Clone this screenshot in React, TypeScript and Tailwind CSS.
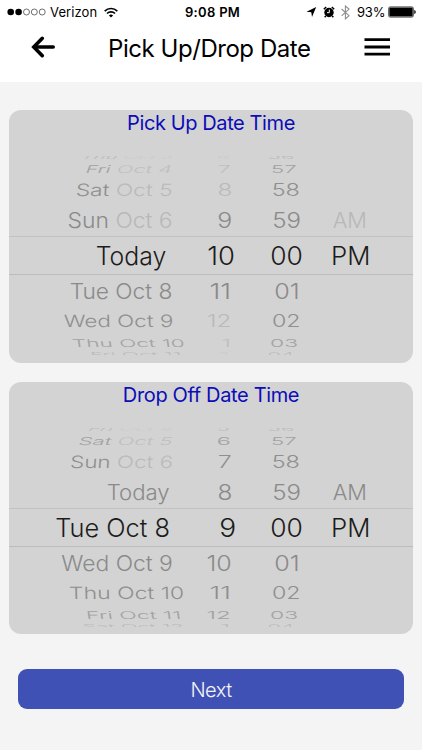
import { useState } from 'react'

type Tone = 'on' | 'dim'
// label, ink left, ink right (both in card pixels), optional faded tail, tone
interface Cell {
  text: string
  from: number
  to: number
  tail?: string
  tone?: Tone
}

type Row = (Cell | null)[]

const COLUMN_ENDS = [175, 228, 296, 363]
const COLUMN_CLASSES = ['w-[175px]', 'w-[53px]', 'w-[68px]', 'w-[67px]']

// Geometry of the drum, from the far top row to the far bottom row
const DRUM = [
  { row: 'h-[4px]', size: 21.4, squash: 0.32, skew: -18, shift: -1, color: '#bbbbbb', dim: '#cccccc' },
  { row: 'h-[17px]', size: 21.4, squash: 0.5, skew: -10, shift: 0.4, color: '#a2a2a2', dim: '#bfbfbf' },
  { row: 'h-[26px]', size: 21.4, squash: 0.79, skew: -3, shift: 0.7, color: '#8f8f8f', dim: '#bababa' },
  { row: 'h-[34px]', size: 21.4, squash: 1, skew: 0, shift: 1, color: '#8a8a8a', dim: '#b8b8b8' },
  { row: 'h-[37px]', size: 25.6, squash: 1, skew: 0, shift: 0, color: '#1c1c1c', dim: '#1c1c1c' },
  { row: 'h-[34px]', size: 21.4, squash: 1, skew: 0, shift: 1, color: '#8a8a8a', dim: '#b8b8b8' },
  { row: 'h-[26px]', size: 21.4, squash: 0.79, skew: 1, shift: 1, color: '#8f8f8f', dim: '#bababa' },
  { row: 'h-[17px]', size: 21.4, squash: 0.5, skew: 4, shift: 0.5, color: '#a2a2a2', dim: '#bfbfbf' },
  { row: 'h-[4px]', size: 21.4, squash: 0.32, skew: 6, shift: 2, color: '#bbbbbb', dim: '#cccccc' },
]

const c = (text: string, from: number, to: number, tone: Tone = 'on', tail?: string): Cell => ({
  text,
  from: from - 9,
  to: to - 9,
  tone,
  tail,
})

const pickUpRows: Row[] = [
  [c('Thu', 82, 173, 'on', ' Oct 3'), c('6', 218, 229.5, 'dim'), c('56', 269, 294), null],
  [c('Fri', 88, 172, 'on', ' Oct 4'), c('7', 219, 230, 'dim'), c('57', 272.5, 296), null],
  [c('Sat', 77, 172, 'on', ' Oct 5'), c('8', 218.5, 231, 'dim'), c('58', 273, 299), null],
  [c('Sun', 68.5, 171.5, 'on', ' Oct 6'), c('9', 218.5, 231.3), c('59', 273.7, 300.3), c('AM', 333, 366, 'dim')],
  [c('Today', 97, 166.3), c('10', 208.5, 234.3), c('00', 271.7, 302.5), c('PM', 333, 368.3)],
  [c('Tue Oct 8', 71, 171.5), c('11', 211, 229.5), c('01', 275.7, 298.3), null],
  [c('Wed Oct 9', 63.5, 172), c('12', 208.5, 230.5, 'dim'), c('02', 272.7, 299), null],
  [c('Thu Oct 10', 73, 183.3), c('1', 222, 229, 'dim'), c('03', 271, 297), null],
  [c('Fri Oct 11', 92, 180), c('2', 219, 229, 'dim'), c('04', 269, 294), null],
]

const dropOffRows: Row[] = [
  [c('Fri', 91, 174, 'on', ' Oct 4'), c('5', 218, 229), c('56', 269, 294), null],
  [c('Sat', 80, 172, 'on', ' Oct 5'), c('6', 218, 230), c('57', 272.5, 296), null],
  [c('Sun', 71, 172, 'on', ' Oct 6'), c('7', 219, 230.7), c('58', 273, 299), null],
  [c('Today', 108, 170), c('8', 218.5, 231), c('59', 273.7, 300.3), c('AM', 333, 366)],
  [c('Tue Oct 8', 56.5, 168.7), c('9', 220, 234.3), c('00', 271.7, 302.5), c('PM', 333, 368.3)],
  [c('Wed Oct 9', 61, 171.5), c('10', 208, 230.7), c('01', 275.7, 298.3), null],
  [c('Thu Oct 10', 70, 182.7), c('11', 211, 229.3), c('02', 272.7, 299), null],
  [c('Fri Oct 11', 88, 179.5), c('12', 208, 230), c('03', 271, 297), null],
  [c('Sat Oct 12', 84, 183), c('1', 221, 228), c('04', 269, 294), null],
]

const ctx = document.createElement('canvas').getContext('2d')!

function WheelCell({ cell, column, level }: { cell: Cell; column: number; level: number }) {
  const drum = DRUM[level]
  ctx.font = `350 ${drum.size}px Inter`
  const m = ctx.measureText(cell.text + (cell.tail ?? ''))
  const stretch = (cell.to - cell.from) / (m.actualBoundingBoxRight + m.actualBoundingBoxLeft)
  const dx = cell.to - COLUMN_ENDS[column] + (m.width - m.actualBoundingBoxRight) * stretch
  const skew = column === 0 ? drum.skew : 0

  return (
    <span
      className="origin-right whitespace-pre font-[350] leading-none"
      style={{
        fontSize: drum.size,
        color: cell.tone === 'dim' ? drum.dim : drum.color,
        transform: `translate(${dx}px, ${drum.shift}px) scale(${stretch}, ${drum.squash}) skewX(${skew}deg)`,
      }}
    >
      {cell.text}
      {cell.tail && <span style={{ color: drum.dim }}>{cell.tail}</span>}
    </span>
  )
}

function DateTimeWheel({ rows }: { rows: Row[] }) {
  return (
    <div className="flex flex-col">
      {rows.map((row, level) => (
        <div
          key={level}
          className={`flex shrink-0 items-center ${DRUM[level].row} ${
            level === 0 || level === 8 ? 'overflow-hidden' : ''
          } ${level === 4 ? 'shadow-[0_-1px_0_#c2c2c2,0_1px_0_#bdbdbd]' : ''}`}
        >
          {row.map((cell, column) => (
            <div key={column} className={`flex shrink-0 justify-end ${COLUMN_CLASSES[column]}`}>
              {cell && <WheelCell cell={cell} column={column} level={level} />}
            </div>
          ))}
        </div>
      ))}
    </div>
  )
}

function StatusBar() {
  return (
    <div className="flex h-6 items-center text-[13px] leading-none">
      <div className="flex w-[185px] items-center pl-[7px]">
        <svg width="39" height="8" viewBox="0 0 39 8">
          <circle cx="3.7" cy="4" r="3.3" />
          <circle cx="11.6" cy="4" r="3.3" />
          {[19.5, 27.3, 35.2].map((cx) => (
            <circle key={cx} cx={cx} cy="4" r="3" fill="none" stroke="#333" strokeWidth="0.7" />
          ))}
        </svg>
        <span className="ml-[4px] tracking-[0.1px]">Verizon</span>
        <svg className="ml-[7px]" width="14" height="11" viewBox="0 0 14 11" fill="none" stroke="#000" strokeWidth="1.7">
          <path d="M0.7 4.1a8.9 8.9 0 0 1 12.6 0" />
          <path d="M3 6.5a5.7 5.7 0 0 1 8 0" />
          <path d="M7 10.6 4.900 8.500a3 3 0 0 1 4.200 0Z" fill="#000" stroke="none" />
        </svg>
      </div>
      <span className="w-[60px] whitespace-nowrap font-semibold tracking-[0.3px]">9:08 PM</span>
      <div className="flex flex-1 items-center pl-[61px]">
        <svg width="11" height="10" viewBox="0 0 11 10">
          <path d="M10.2 0 0.5 4.8 5.3 5.2 6 9.9Z" />
        </svg>
        <svg className="ml-[6px]" width="12" height="12" viewBox="0 0 12 12">
          <circle cx="6" cy="6.5" r="4.7" />
          <path d="M0.8 3.2 3.2 1M8.8 1l2.4 2.2M2.8 10.1 1.7 11.3M9.2 10.1l1.1 1.2" stroke="#000" strokeWidth="1.5" />
          <path d="M6.3 3.6v3.1H4" fill="none" stroke="#fff" strokeWidth="1" />
        </svg>
        <svg className="ml-[6px]" width="9" height="15" viewBox="0 0 9 15" fill="none" stroke="#8f8f8f" strokeWidth="1.1">
          <path d="M0.6 4 8 10.7 4.4 13.9V1L8 4.1 0.6 10.9" />
        </svg>
        <span className="ml-[7px] tracking-[-0.2px]">93%</span>
        <svg className="ml-[3px] shrink-0" width="29" height="12" viewBox="0 0 29 12">
          <rect x="0.5" y="0.8" width="25" height="10.4" rx="1.8" fill="none" stroke="#000" strokeWidth="0.6" />
          <rect x="1.3" y="1.6" width="23.400" height="8.800" rx="1" />
          <path d="M26.3 4v4c1-.3 1.4-1 1.4-2s-.4-1.700-1.400-2Z" />
        </svg>
      </div>
    </div>
  )
}

export default function App() {
  const [pressed, setPressed] = useState(false)

  return (
    <div className="flex h-[750px] w-[422px] flex-col overflow-hidden bg-[#f4f4f4] font-['Inter',sans-serif] text-black">
      {/* Header */}
      <header className="h-[82px] bg-white">
        <StatusBar />
        <div className="flex h-[48px] items-center">
          <button className="ml-[31px]" aria-label="Back">
            <svg className="-mt-[3px]" width="25" height="24" viewBox="0 0 25 24" fill="none" stroke="#000" strokeWidth="3.6" strokeLinecap="round">
              <path d="M11.300 3.300 2.800 12l8.500 8.700" strokeLinejoin="miter" />
              <path d="M4 12h18.200" />
            </svg>
          </button>
          <h1 className="ml-[52px] mt-[2px] w-[205px] whitespace-nowrap text-[24px] leading-none tracking-[-0.45px]">
            Pick Up/Drop Date
          </h1>
          <button className="ml-[51px]" aria-label="Menu">
            <svg className="-mt-[3px]" width="26" height="18" viewBox="0 0 26 18">
              <path d="M0.500 1.700h25.500M0.500 9h25.500M0.500 16.100h25.500" stroke="#000" strokeWidth="2.800" />
            </svg>
          </button>
        </div>
      </header>

      {/* Pickers */}
      <section className="mx-[9px] mt-7 h-[253px] w-[404px] rounded-[12px] bg-[#d3d3d3]">
        <h2 className="flex h-[46px] justify-center pt-[3px] text-[20px] leading-5 tracking-[-0.4px] text-[#0c0cb8]">
          Pick Up Date Time
        </h2>
        <DateTimeWheel rows={pickUpRows} />
      </section>
      <section className="mx-[9px] mt-[19px] h-[252px] w-[404px] rounded-[12px] bg-[#d3d3d3]">
        <h2 className="flex h-[46px] justify-center pt-[3px] text-[20px] leading-5 tracking-[-0.35px] text-[#0c0cb8]">
          Drop Off Date Time
        </h2>
        <DateTimeWheel rows={dropOffRows} />
      </section>

      <button
        onClick={() => setPressed(!pressed)}
        className="ml-[18px] mt-[35px] flex h-10 w-[386px] items-center justify-center rounded-[9px] bg-[#3f51b5] pt-[2px] text-[20px] font-[350] tracking-[-0.5px] text-[#f4f4f4]"
      >
        Next
      </button>
    </div>
  )
}
